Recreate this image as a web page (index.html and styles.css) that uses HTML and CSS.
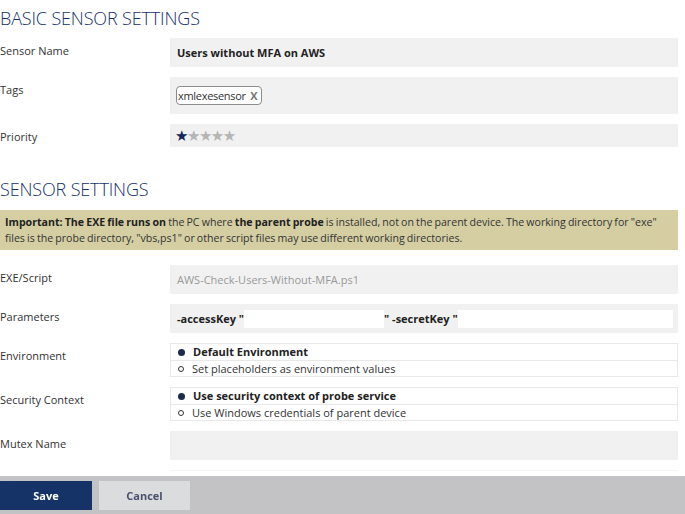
FILE: index.html
```html
<!DOCTYPE html>
<html>
<head>
<meta charset="utf-8">
<link rel="stylesheet" href="styles.css">
</head>
<body>
<div class="page">
  <h2 class="section-title first">BASIC SENSOR SETTINGS</h2>
  <div class="row">
    <div class="label">Sensor Name</div>
    <div class="field h29"><span class="bold">Users without MFA on AWS</span></div>
  </div>
  <div class="row">
    <div class="label">Tags</div>
    <div class="field tags"><span class="tag">xmlexesensor <span class="tag-x">X</span></span></div>
  </div>
  <div class="row">
    <div class="label">Priority</div>
    <div class="field stars"><span class="star on">★</span><span class="star">★★★★</span></div>
  </div>

  <h2 class="section-title second">SENSOR SETTINGS</h2>
  <div class="notice">
    <div class="notice-line"><b>Important: The EXE file runs on</b> <span>the PC where</span> <b>the parent probe</b> <span>is installed, not on the parent device. The working directory for "exe"</span></div>
    <div class="notice-line">files is the probe directory, "vbs,ps1" or other script files may use different working directories.</div>
  </div>

  <div class="row">
    <div class="label">EXE/Script</div>
    <div class="field h29 muted">AWS-Check-Users-Without-MFA.ps1</div>
  </div>
  <div class="row">
    <div class="label">Parameters</div>
    <div class="field h29 params"><span class="bold">-accessKey "</span><span class="redact r1"></span><span class="bold">" -secretKey "</span><span class="redact r2"></span></div>
  </div>
  <div class="row">
    <div class="label">Environment</div>
    <div class="radios">
      <div class="opt sel"><span class="dot"></span>Default Environment</div>
      <div class="opt"><span class="ring"></span>Set placeholders as environment values</div>
    </div>
  </div>
  <div class="row">
    <div class="label">Security Context</div>
    <div class="radios">
      <div class="opt sel"><span class="dot"></span>Use security context of probe service</div>
      <div class="opt"><span class="ring"></span>Use Windows credentials of parent device</div>
    </div>
  </div>
  <div class="row">
    <div class="label">Mutex Name</div>
    <div class="field h29"></div>
  </div>
  <div class="row">
    <div class="label timeout-label">Timeout (Sec.)</div>
    <div class="field h29 muted timeout">60</div>
  </div>
</div>
<div class="footer">
  <button class="btn save">Save</button>
  <button class="btn cancel">Cancel</button>
</div>
</body>
</html>
```
FILE: styles.css
```css
html, body {
  margin: 0;
  padding: 0;
  background: #fff;
}
body {
  font-family: "Open Sans", "Noto Sans", sans-serif;
  font-size: 11px;
  color: #333;
  overflow: hidden;
}
.page {
  width: 678px;
}
.section-title {
  margin: 0;
  font-weight: 300;
  font-size: 18px;
  color: #16306a;
  line-height: 20px;
  letter-spacing: -0.15px;
}
.section-title.first {
  padding-top: 8px;
  margin-bottom: 10px;
}
.section-title.second {
  margin-top: 32px;
  margin-bottom: 11px;
}
.row {
  display: flex;
  margin-bottom: 10px;
}
.label {
  width: 170px;
  flex: none;
  padding-top: 6px;
  line-height: 14px;
  color: #333;
}
.field {
  flex: 1;
  background: #f1f1f1;
  box-sizing: border-box;
  padding: 0 7px;
  display: flex;
  align-items: center;
  color: #222;
}
.h29 { height: 29px; }
.bold { font-weight: 700; }
.tags {
  height: 37px;
  padding-left: 6px;
}
.tag {
  display: inline-block;
  border: 1px solid #8c8c8c;
  border-radius: 4px;
  background: #fff;
  height: 17px;
  line-height: 17px;
  padding: 0 4px 0 1px;
  color: #333;
  letter-spacing: -0.3px;
}
.tag-x {
  font-weight: 700;
  color: #777;
  margin-left: 2px;
}
.stars {
  height: 23px;
  padding-left: 5px;
  font-size: 15px;
  letter-spacing: -1.5px;
  font-family: "DejaVu Sans", sans-serif;
}
.star { color: #b5b5b5; }
.star.on { color: #14295a; }
.notice {
  background: #d5cea3;
  padding: 4px 5px;
  line-height: 16px;
  color: #333;
  margin-bottom: 15px;
  font-size: 10.6px;
  word-spacing: -0.6px;
}
.notice-line { white-space: nowrap; }
.notice b { color: #222; }
.muted { color: #999; }
.params { padding-right: 5px; }
.redact {
  display: inline-block;
  background: #fff;
  height: 18px;
}
.r1 { width: 140px; }
.r2 { flex: 1; }
.radios {
  flex: 1;
  border: 1px solid #e8e8e8;
  box-sizing: border-box;
  height: 34px;
}
.opt {
  height: 16px;
  line-height: 16px;
  padding-left: 7px;
  display: flex;
  align-items: center;
  color: #333;
}
.opt + .opt { border-top: 1px solid #e8e8e8; }
.opt.sel { font-weight: 700; color: #222; }
.dot, .ring {
  width: 6px;
  height: 6px;
  border-radius: 50%;
  box-sizing: border-box;
  margin-right: 8px;
  flex: none;
}
.dot { background: #1e2a4a; width: 7px; height: 7px; }
.ring { border: 1px solid #333; }
.timeout-label { padding-top: 10px; }
.timeout { border-top: 1px solid #f4f4f4; background: #fff; align-items: flex-end; padding-bottom: 0; }
.footer {
  position: fixed;
  left: 0;
  right: 0;
  bottom: 0;
  height: 38px;
  background: rgba(188,189,191,0.9);
  display: flex;
  align-items: center;
  gap: 7px;
}
.btn {
  border: none;
  height: 29px;
  width: 92px;
  font-family: "Open Sans", "Noto Sans", sans-serif;
  font-size: 11px;
  font-weight: 700;
  cursor: pointer;
  padding: 0;
}
.save {
  background: rgba(11,43,98,0.94);
  color: #fff;
}
.cancel {
  background: rgba(222,223,225,0.88);
  color: #4a5270;
  width: 91px;
}
```
